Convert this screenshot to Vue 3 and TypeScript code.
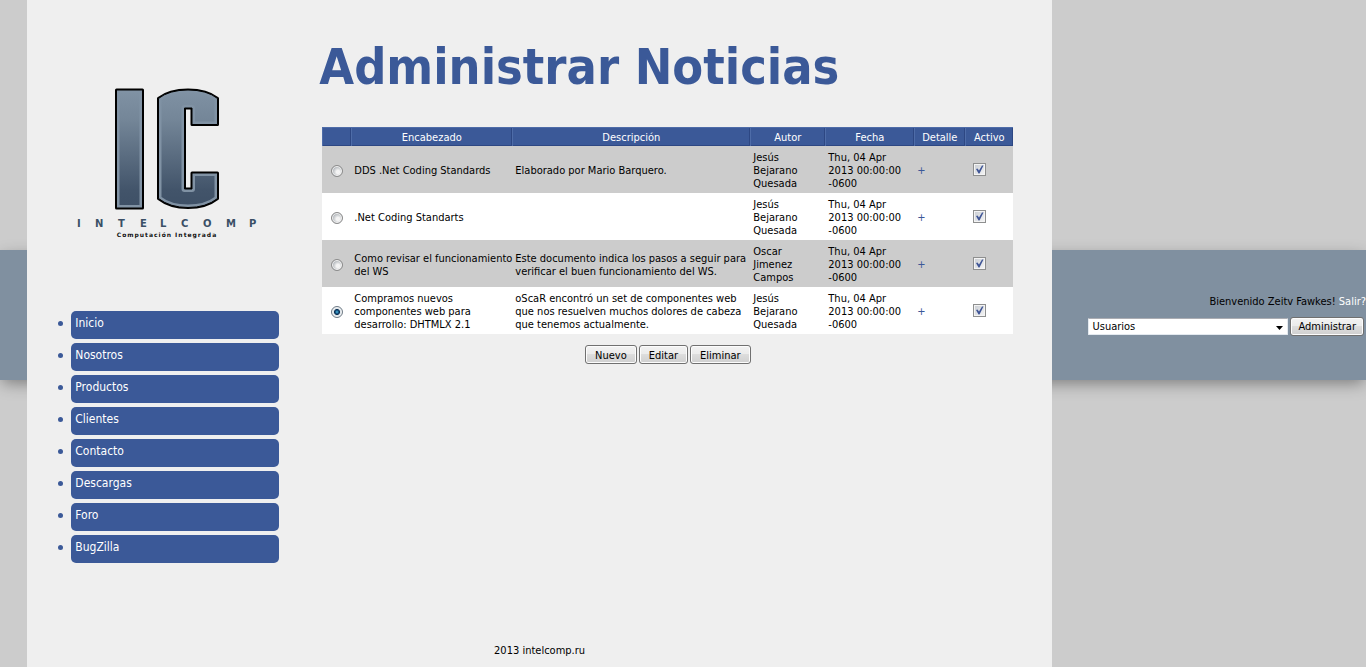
<script setup lang="ts">
import { ref } from 'vue'

interface NewsItem {
  id: number
  title: string
  description: string
  author: string
  date: string
  active: boolean
}

const menu: string[] = ['Inicio', 'Nosotros', 'Productos', 'Clientes', 'Contacto', 'Descargas', 'Foro', 'BugZilla']

const date = 'Thu, 04 Apr 2013 00:00:00 -0600'

const news = ref<NewsItem[]>([
  { id: 1, title: 'DDS .Net Coding Standards', description: 'Elaborado por Mario Barquero.', author: 'Jesús Bejarano Quesada', date, active: true },
  { id: 2, title: '.Net Coding Standarts', description: '', author: 'Jesús Bejarano Quesada', date, active: true },
  { id: 3, title: 'Como revisar el funcionamiento\ndel WS', description: 'Este documento indica los pasos a seguir para verificar el buen funcionamiento del WS.', author: 'Oscar Jimenez Campos', date, active: true },
  { id: 4, title: 'Compramos nuevos\ncomponentes web para\ndesarrollo: DHTMLX 2.1', description: 'oScaR encontró un set de componentes web que nos resuelven muchos dolores de cabeza que tenemos actualmente.', author: 'Jesús Bejarano Quesada', date, active: true },
])

const selected = ref<number>(4)
const section = ref<string>('Usuarios')
</script>

<template>
  <div class="page">
    <div class="band"></div>

    <div class="sheet">
      <div class="columns">
        <aside class="sidebar">
          <svg class="logo" viewBox="0 0 190 160" role="img" aria-label="Intelcomp">
            <defs>
              <linearGradient id="steel" x1="0" y1="0" x2="0" y2="1">
                <stop offset="0" stop-color="#8092a4" />
                <stop offset="0.25" stop-color="#748698" />
                <stop offset="0.85" stop-color="#42546a" />
                <stop offset="1" stop-color="#3e5066" />
              </linearGradient>
              <path id="letter-i" d="M44.500 10H70.500V128H44.500Z" />
              <path id="letter-c" d="M86.500 18.500Q97 10 116 10T145.500 18.500V44.500H120V28H112.500V109H120V93H145.500V118.500Q134 127.500 116 127.500T86.500 118.500Z" />
              <clipPath id="clip-i"><use href="#letter-i" /></clipPath>
              <clipPath id="clip-c"><use href="#letter-c" /></clipPath>
            </defs>
            <g stroke-linejoin="round" fill="url(#steel)">
              <use href="#letter-i" stroke="#000" stroke-width="3" />
              <use href="#letter-i" stroke="#8092a4" stroke-width="6" clip-path="url(#clip-i)" />
              <use href="#letter-c" stroke="#000" stroke-width="3" />
              <use href="#letter-c" stroke="#8092a4" stroke-width="6" clip-path="url(#clip-c)" />
            </g>
            <g stroke-linejoin="round" fill="none" stroke="#000" stroke-width="1">
              <use href="#letter-i" />
              <use href="#letter-c" />
            </g>
            <text class="brand" y="147" x="5 23 46 68 88 109 131 154 177">INTELCOMP</text>
            <text class="tagline" x="95" y="157">Computación Integrada</text>
          </svg>

          <nav>
            <ul class="menu">
              <li v-for="item in menu" :key="item"><a href="#">{{ item }}</a></li>
            </ul>
          </nav>
        </aside>

        <main class="main">
          <h1>Administrar Noticias</h1>

          <table class="news">
            <colgroup>
              <col class="c-pick" /><col class="c-title" /><col class="c-desc" /><col class="c-author" />
              <col class="c-date" /><col class="c-detail" /><col class="c-active" />
            </colgroup>
            <thead>
              <tr>
                <th></th>
                <th>Encabezado</th>
                <th>Descripción</th>
                <th>Autor</th>
                <th>Fecha</th>
                <th>Detalle</th>
                <th>Activo</th>
              </tr>
            </thead>
            <tbody>
              <tr v-for="n in news" :key="n.id">
                <td class="pick"><input v-model="selected" type="radio" name="news" :value="n.id" :aria-label="n.title" /></td>
                <td class="title">{{ n.title }}</td>
                <td>{{ n.description }}</td>
                <td>{{ n.author }}</td>
                <td>{{ n.date }}</td>
                <td class="detail"><a href="#">+</a></td>
                <td class="active"><input v-model="n.active" type="checkbox" aria-label="Activo" /></td>
              </tr>
            </tbody>
          </table>

          <div class="actions">
            <button type="button">Nuevo</button>
            <button type="button">Editar</button>
            <button type="button">Eliminar</button>
          </div>
        </main>
      </div>

      <footer>2013 intelcomp.ru</footer>
    </div>

    <div class="account">
      <div>Bienvenido Zeitv Fawkes! <a href="#">Salir?</a></div>
      <div class="controls">
        <div class="picker">
          <select v-model="section" aria-label="Sección">
            <option>Usuarios</option>
          </select>
          <svg viewBox="0 0 7 4" aria-hidden="true"><path d="M0 0H7L3.500 4Z" /></svg>
        </div>
        <button type="button">Administrar</button>
      </div>
    </div>
  </div>
</template>

<style>
body {
  margin: 0;
  background: #ccc;
}
</style>

<style scoped>
.page {
  display: grid;
  grid-template-columns: 2% 75% minmax(0, 1fr);
  grid-template-rows: 250px 130px 1fr;
  min-height: 100vh;
  overflow: hidden;
  color: #000;
  font: 11px/13px Tahoma, "DejaVu Sans Condensed", "DejaVu Sans", sans-serif;
}

.band {
  grid-area: 2 / 1 / 3 / -1;
  background: #8090a0;
  box-shadow: 0 5px 15px -2px rgba(0, 0, 0, 0.4);
}

.sheet {
  grid-area: 1 / 2 / -1 / 3;
  display: flex;
  flex-direction: column;
  background: #efefef;
}

.columns {
  display: flex;
  flex: 1;
}

.sidebar {
  flex: none;
  width: 252px;
  padding-top: 80px;
}

.logo {
  display: block;
  width: 190px;
  height: 160px;
  margin-left: 45px;
}

.brand {
  fill: #3b4f66;
  font: bold 10px "DejaVu Sans", sans-serif;
}

.tagline {
  fill: #111;
  font: bold 6px "DejaVu Sans", sans-serif;
  letter-spacing: 1px;
  text-anchor: middle;
}

.menu {
  display: grid;
  gap: 4px;
  margin: 71px 0 0;
  padding: 0 0 0 31px;
  font-size: 12px;
  line-height: 24px;
  list-style: none;
}

.menu li {
  display: flex;
  gap: 8px;
}

.menu li::before {
  content: "";
  width: 5px;
  height: 5px;
  margin-top: 10px;
  border-radius: 50%;
  background: #3b5998;
}

.menu a {
  flex: 1;
  box-sizing: border-box;
  height: 28px;
  padding: 0 4px;
  border-radius: 5px;
  background: #3b5998;
  color: #fff;
  text-decoration: none;
}

.main {
  flex: none;
  width: 697px;
  padding: 37px 0 0 40px;
}

h1 {
  margin: 0;
  color: #3b5998;
  font-size: 50px;
  line-height: 60px;
  white-space: nowrap;
}

.news {
  width: 691px;
  margin: 30px auto 0;
  border-collapse: collapse;
  table-layout: fixed;
}

.c-pick { width: 29px; }
.c-title { width: 161px; }
.c-desc { width: 238px; }
.c-author { width: 75px; }
.c-date { width: 89px; }
.c-detail { width: 51px; }
.c-active { width: 48px; }

th {
  height: 19px;
  box-sizing: border-box;
  padding: 1px 0 0;
  background: #3b5998;
  box-shadow: inset 1px 1px #4e6ca8, inset -1px -1px #2d4783;
  color: #fff;
  font-weight: normal;
}

td {
  height: 39px;
  padding: 5px 3px 3px;
}

tbody tr {
  background: #fff;
}

tbody tr:nth-child(odd) {
  background: #ccc;
}

.title {
  padding-right: 0;
  white-space: pre;
}

.detail a {
  color: #3b5998;
  text-decoration: none;
}

.pick {
  padding-left: 9px;
}

.active {
  padding: 4px 3px 4px 8px;
}

input {
  display: block;
  box-sizing: border-box;
  margin: 0;
  appearance: none;
}

input[type="radio"] {
  width: 12px;
  height: 12px;
  border: 1px solid #8b8b8b;
  border-radius: 50%;
  background: radial-gradient(circle at 60% 60%, #f4f4f4 20%, #b8bcc0 60%);
  box-shadow: inset 0 0 0 1px #f4f4f4;
}

input[type="radio"]:checked {
  border-color: #6f7b86;
  background: radial-gradient(circle, #4fc0e8 0, #124a78 25%, #0d2f50 38%, #dce4ea 46%);
}

input[type="checkbox"] {
  width: 13px;
  height: 13px;
  border: 1px solid #8e8f8f;
  background: linear-gradient(135deg, #c8ccd2, #f6f6f6);
  box-shadow: inset 0 0 0 1px #f4f4f4;
}

input[type="checkbox"]:checked {
  background: url("data:image/svg+xml,%3Csvg xmlns='http://www.w3.org/2000/svg' viewBox='0 0 11 11'%3E%3Cpath d='M2 5L3.500 4.500L5 6.500L8 1.500H9.500L5.500 9.500H4.500Z' fill='%233f5596'/%3E%3C/svg%3E"), linear-gradient(135deg, #c8ccd2, #f6f6f6);
}

button {
  box-sizing: border-box;
  height: 19px;
  margin: 0;
  padding: 0 7px;
  border: 1px solid #707070;
  border-radius: 3px;
  background: linear-gradient(#f2f2f2, #ebebeb 50%, #dddddd 50%, #cfcfcf);
  box-shadow: inset 0 0 0 1px #fcfcfc;
  color: #000;
  font: inherit;
}

.actions {
  display: flex;
  justify-content: center;
  gap: 2px;
  margin-top: 11px;
}

.actions button {
  padding: 1px 9px 0;
}

footer {
  padding: 0 0 10px;
  text-align: center;
}

.account {
  grid-area: 2 / 3;
  display: grid;
  align-content: center;
  justify-items: end;
  gap: 9px;
  position: relative;
}

.account a {
  color: #fff;
  text-decoration: none;
}

.controls {
  display: flex;
  align-items: center;
  gap: 2px;
  margin-right: 2px;
}

.picker {
  display: grid;
  align-items: center;
}

.picker > * {
  grid-area: 1 / 1;
}

.picker svg {
  width: 7px;
  height: 4px;
  margin: 3px 5px 0 0;
  justify-self: end;
  pointer-events: none;
}

select {
  box-sizing: border-box;
  width: 200px;
  height: 17px;
  margin: 0;
  padding: 0 3px;
  border: 1px solid #e3e9ef;
  border-top-color: #abadb3;
  border-radius: 1px;
  background: #fff;
  color: #000;
  font: inherit;
  appearance: none;
}
</style>
